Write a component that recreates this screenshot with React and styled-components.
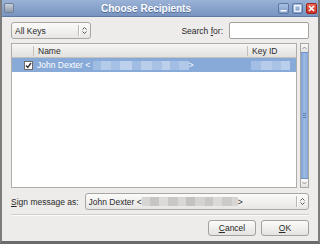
import React from 'react';
import styled, { createGlobalStyle } from 'styled-components';

const GlobalStyle = createGlobalStyle`
  html, body {
    margin: 0;
    padding: 0;
    background: #edeceb;
  }
  * { box-sizing: border-box; }
`;

const Window = styled.div`
  width: 320px;
  height: 244px;
  display: flex;
  flex-direction: column;
  background: #edeceb;
  border-left: 2px solid #7c7c7c;
  border-right: 2px solid #7c7c7c;
  border-bottom: 3px solid #6b6b6b;
  font-family: "Liberation Sans", Arial, sans-serif;
  font-size: 8.5px;
  color: #2a2a2a;
  overflow: hidden;
`;

const TitleBar = styled.div`
  height: 17px;
  margin: 0 -2px;
  display: flex;
  align-items: center;
  padding: 0 3px 0 4px;
  background: linear-gradient(#9ab2d6, #7893c0);
  border-bottom: 1px solid #5d7aa6;
`;

const AppIcon = styled.div`
  width: 10px;
  height: 10px;
  border-radius: 2px;
  background: linear-gradient(#c9d2dd, #8e9aab);
  border: 1px solid #6f7f96;
`;

const Title = styled.div`
  flex: 1;
  text-align: center;
  color: #fff;
  font-weight: bold;
  font-size: 10px;
  text-shadow: 0 1px 0 #4d6a96;
`;

const Controls = styled.div`
  display: flex;
  gap: 3px;
`;

const CtlBtn = styled.div`
  width: 11px;
  height: 11px;
  border-radius: 2px;
  border: 1px solid ${(p) => (p.$close ? '#9e2418' : '#5b79a5')};
  background: ${(p) =>
    p.$close ? 'linear-gradient(#ee6a5a, #cf2e1f)' : 'linear-gradient(#a9c0e1, #7f9dca)'};
  display: flex;
  align-items: center;
  justify-content: center;
`;

const Body = styled.div`
  flex: 1;
  display: flex;
  flex-direction: column;
  padding: 5px 9px 0 9px;
`;

const TopRow = styled.div`
  display: flex;
  align-items: center;
  height: 17px;
`;

const Combo = styled.div`
  display: flex;
  align-items: center;
  height: 17px;
  width: ${(p) => p.$w};
  border: 1px solid #a8a7a4;
  border-radius: 3px;
  background: linear-gradient(#fbfbfa, #e7e6e4);
  padding-left: 3px;
  flex: ${(p) => (p.$grow ? 1 : 'none')};
  overflow: hidden;
`;

const ComboText = styled.div`
  flex: 1;
  display: flex;
  align-items: center;
  white-space: nowrap;
  overflow: hidden;
`;

const ComboSep = styled.div`
  width: 1px;
  height: 11px;
  background: #b9b8b5;
  box-shadow: 1px 0 0 #fff;
`;

const ComboArrows = styled.div`
  width: 11px;
  display: flex;
  justify-content: center;
`;

const Spacer = styled.div`
  flex: 1;
`;

const Label = styled.span`
  white-space: nowrap;
  margin-right: ${(p) => p.$mr || 0};
`;

const U = styled.span`
  text-decoration: underline;
`;

const SearchInput = styled.div`
  width: 80px;
  height: 17px;
  border: 1px solid #a3a29f;
  border-radius: 2px;
  background: #fff;
`;

const ListArea = styled.div`
  margin-top: 4px;
  height: 145px;
  display: flex;
  gap: 3px;
`;

const Table = styled.div`
  flex: 1;
  border: 1px solid #aeada9;
  background: #fff;
  display: flex;
  flex-direction: column;
`;

const Header = styled.div`
  display: grid;
  grid-template-columns: 21px 214px 1fr;
  height: 14px;
  background: linear-gradient(#f6f6f5, #e2e1de);
  border-bottom: 1px solid #c3c2bf;
`;

const HeadCell = styled.div`
  display: flex;
  align-items: center;
  padding-left: 4px;
  border-left: ${(p) => (p.$first ? 'none' : '1px solid #c2c1be')};
  margin: 2px 0;
`;

const Row = styled.div`
  display: grid;
  grid-template-columns: 21px 214px 1fr;
  height: 14px;
  background: ${(p) => (p.$selected ? '#87aad8' : 'transparent')};
  color: ${(p) => (p.$selected ? '#fff' : '#2a2a2a')};
`;

const Cell = styled.div`
  display: flex;
  align-items: center;
  padding-left: ${(p) => p.$pl || '4px'};
  white-space: nowrap;
  overflow: hidden;
`;

const Check = styled.div`
  width: 9px;
  height: 9px;
  margin-left: 12px;
  border: 1px solid #6d6c69;
  background: #fff;
  display: flex;
  align-items: center;
  justify-content: center;
`;

const Blur = styled.span`
  display: inline-block;
  height: 9px;
  width: ${(p) => p.$w}px;
  background: ${(p) => p.$c};
`;

const Scrollbar = styled.div`
  width: 9px;
  display: flex;
  flex-direction: column;
  border: 1px solid #a7a6a2;
  background: #e3e2df;
`;

const ScrollBtn = styled.div`
  height: 8px;
  background: linear-gradient(#fafafa, #e4e3e0);
  display: flex;
  align-items: center;
  justify-content: center;
`;

const Thumb = styled.div`
  flex: 1;
  background: linear-gradient(90deg, #7fa2d4, #9cbae3 50%, #86a8d8);
  border-top: 1px solid #6e92c6;
  border-bottom: 1px solid #6e92c6;
  display: flex;
  align-items: center;
  justify-content: center;
`;

const Grip = styled.div`
  width: 3px;
  height: 5px;
  border-top: 1px solid #5d80b3;
  border-bottom: 1px solid #5d80b3;
  background: linear-gradient(#5d80b3, #5d80b3) center / 3px 1px no-repeat;
`;

const SignRow = styled.div`
  margin-top: 5px;
  display: flex;
  align-items: center;
`;

const Separator = styled.div`
  margin-top: 4px;
  height: 2px;
  border-top: 1px solid #cfceca;
  border-bottom: 1px solid #fbfbfb;
`;

const ButtonRow = styled.div`
  margin-top: 4px;
  display: flex;
  justify-content: flex-end;
  gap: 5px;
`;

const Button = styled.div`
  width: 48px;
  height: 16px;
  border: 1px solid #a2a19e;
  border-radius: 3px;
  background: linear-gradient(#fbfbfa, #e4e3e0);
  display: flex;
  align-items: center;
  justify-content: center;
`;

const Arrows = () => (
  <svg width="5" height="9" viewBox="0 0 5 9">
    <path d="M0.5 3.5 L2.5 1.5 L4.5 3.5 M0.5 5.5 L2.5 7.5 L4.5 5.5" fill="none" stroke="#4a4a4a" strokeWidth="0.9" />
  </svg>
);

const rowBlur = [
  ['#9fbce3', 8], ['#b4cbea', 10], ['#a6c1e6', 9], ['#bdd1ec', 12], ['#a2bde4', 9],
  ['#b8ceeb', 11], ['#a8c2e6', 10], ['#bcd0ec', 8], ['#a3bee5', 9], ['#b1c8e9', 10],
];
const keyBlur = [['#a4bfe5', 10], ['#b6ccea', 11], ['#a9c3e7', 9], ['#b9cfec', 9]];
const signBlur = [
  ['#d6d5d3', 8], ['#c6c5c3', 9], ['#dcdbd9', 9], ['#c9c8c6', 10], ['#d8d7d5', 8],
  ['#c3c2c0', 9], ['#d4d3d1', 10], ['#c8c7c5', 8], ['#dad9d7', 9], ['#cbcac8', 10], ['#d7d6d4', 6],
];

export default function App() {
  return (
    <>
      <GlobalStyle />
      <Window>
        <TitleBar>
          <AppIcon />
          <Title>Choose Recipients</Title>
          <Controls>
            <CtlBtn>
              <svg width="7" height="7" viewBox="0 0 7 7"><rect x="0.5" y="5" width="6" height="1.5" fill="#fff" /></svg>
            </CtlBtn>
            <CtlBtn>
              <svg width="7" height="7" viewBox="0 0 7 7"><rect x="0.75" y="0.75" width="5.5" height="5.5" fill="none" stroke="#fff" strokeWidth="1.2" /></svg>
            </CtlBtn>
            <CtlBtn $close>
              <svg width="7" height="7" viewBox="0 0 7 7"><path d="M1 1 L6 6 M6 1 L1 6" stroke="#fff" strokeWidth="1.6" /></svg>
            </CtlBtn>
          </Controls>
        </TitleBar>
        <Body>
          <TopRow>
            <Combo $w="80px">
              <ComboText>All Keys</ComboText>
              <ComboSep />
              <ComboArrows><Arrows /></ComboArrows>
            </Combo>
            <Spacer />
            <Label $mr="6px">Search <U>f</U>or:</Label>
            <SearchInput />
          </TopRow>
          <ListArea>
            <Table>
              <Header>
                <HeadCell $first />
                <HeadCell>Name</HeadCell>
                <HeadCell>Key ID</HeadCell>
              </Header>
              <Row $selected>
                <Cell $pl="0">
                  <Check>
                    <svg width="7" height="7" viewBox="0 0 7 7"><path d="M1 3.5 L2.8 5.5 L6 1" fill="none" stroke="#333" strokeWidth="1.4" /></svg>
                  </Check>
                </Cell>
                <Cell>
                  John Dexter &lt;&nbsp;
                  {rowBlur.map(([c, w], i) => <Blur key={i} $c={c} $w={w} />)}
                  &gt;
                </Cell>
                <Cell>
                  {keyBlur.map(([c, w], i) => <Blur key={i} $c={c} $w={w} />)}
                </Cell>
              </Row>
            </Table>
            <Scrollbar>
              <ScrollBtn>
                <svg width="5" height="4" viewBox="0 0 5 4"><path d="M0.5 3 L2.5 1 L4.5 3" fill="none" stroke="#888" strokeWidth="0.9" /></svg>
              </ScrollBtn>
              <Thumb><Grip /></Thumb>
              <ScrollBtn>
                <svg width="5" height="4" viewBox="0 0 5 4"><path d="M0.5 1 L2.5 3 L4.5 1" fill="none" stroke="#888" strokeWidth="0.9" /></svg>
              </ScrollBtn>
            </Scrollbar>
          </ListArea>
          <SignRow>
            <Label $mr="6px"><U>S</U>ign message as:</Label>
            <Combo $grow>
              <ComboText>
                John Dexter &lt;
                {signBlur.map(([c, w], i) => <Blur key={i} $c={c} $w={w} />)}
                &gt;
              </ComboText>
              <ComboSep />
              <ComboArrows><Arrows /></ComboArrows>
            </Combo>
          </SignRow>
          <Separator />
          <ButtonRow>
            <Button><U>C</U>ancel</Button>
            <Button><U>O</U>K</Button>
          </ButtonRow>
        </Body>
      </Window>
    </>
  );
}
